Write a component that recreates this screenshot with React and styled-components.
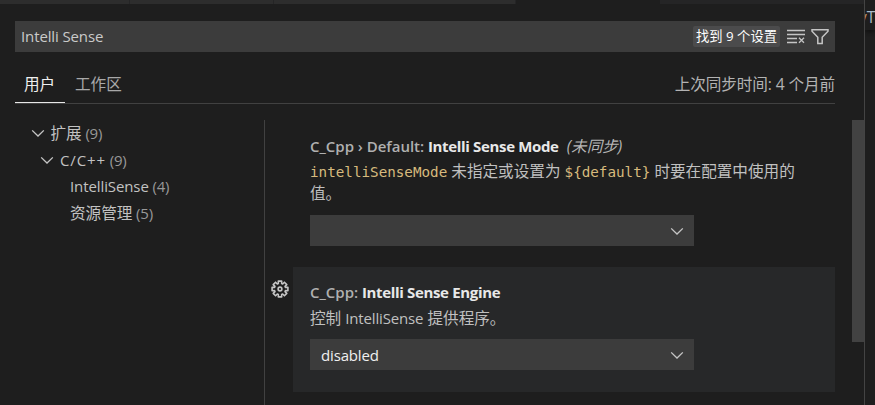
import React from "react";
import styled, { createGlobalStyle } from "styled-components";

const Global = createGlobalStyle`
  * { box-sizing: border-box; }
  body {
    margin: 0;
    background: #1e1e1e;
    overflow: hidden;
    color: #c2c2c2;
    font: 15.6px/22px "Open Sans", "Noto Sans CJK SC", sans-serif;
  }
`;

const Window = styled.div`
  display: grid;
  grid-template-columns: 864px 11px;
  width: 875px;
  height: 405px;
`;

const Editor = styled.main`
  display: flex;
  flex-direction: column;
  min-width: 0;
  height: 405px;
  overflow: hidden;
`;

const EditorTabs = styled.div`
  display: grid;
  grid-template-columns: 130px 144px 242px 144px 1fr;
  height: 4px;
  flex: none;
  background: #252526;
`;

const EditorTab = styled.div`
  background: ${(p) => (p.$active ? "#1e1e1e" : "#2d2d2d")};
  border-right: ${(p) => (p.$active ? "0" : "1px solid #252526")};
`;

const SearchBar = styled.div`
  display: flex;
  align-items: center;
  width: 820px;
  height: 31px;
  margin: 17px 0 0 15px;
  padding: 0 6px;
  flex: none;
  background: #3c3c3c;
  color: #cacaca;
`;

const Query = styled.span`
  flex: 1;
  padding-bottom: 2px;
`;

const ResultCount = styled.span`
  width: 87px;
  height: 21px;
  border-radius: 2px;
  background: #4b4b4c;
  color: #fff;
  font-size: 13.3px;
  line-height: 21px;
  text-align: center;
  white-space: nowrap;
`;

const SearchActions = styled.div`
  display: flex;
  gap: 6px;
  margin-left: 7px;
`;

const Icon = styled.svg`
  display: block;
  flex: none;
  fill: none;
  stroke: #c5c5c5;
  stroke-width: ${(p) => p.$weight || 1.3};
`;

const ScopeBar = styled.div`
  display: flex;
  width: 820px;
  height: 52px;
  margin-left: 15px;
  flex: none;
  border-bottom: 1px solid #414141;
`;

const ScopeTab = styled.div`
  width: ${(p) => p.$width}px;
  height: 51px;
  padding: 21px 0 0 ${(p) => p.$inset}px;
  border-bottom: 1px solid ${(p) => (p.$active ? "#e7e7e7" : "transparent")};
  color: ${(p) => (p.$active ? "#f0f0f0" : "#a8a8a8")};
`;

const SyncTime = styled.div`
  margin-left: auto;
  padding-top: 21px;
  color: #b3b3b3;
  letter-spacing: -0.1px;
  white-space: nowrap;
`;

const Body = styled.div`
  display: grid;
  grid-template-columns: 264px 588px 12px;
  height: 285px;
  margin-top: 16px;
`;

const Tree = styled.nav`
  display: flex;
  flex-direction: column;
`;

const TreeRow = styled.div`
  display: flex;
  align-items: center;
  height: 26.5px;
  padding-left: ${(p) => p.$indent}px;
  white-space: pre;
`;

const Twistie = styled.span`
  width: 20px;
  flex: none;
`;

const Latin = styled.span`
  font-size: 15px;
  letter-spacing: ${(p) => p.$tracking || 0}px;
`;

const Count = styled.span`
  color: #989898;
  font-size: 15px;
  letter-spacing: -0.2px;
`;

const Settings = styled.section`
  border-left: 1px solid #414141;
`;

const Setting = styled.article`
  display: grid;
  grid-template-columns: 28px 542px;
  height: ${(p) => p.$height}px;
`;

const Gutter = styled.div`
  padding: 13px 0 0 6px;
`;

const SettingContent = styled.div`
  padding: ${(p) => (p.$focused ? 14 : 15)}px 17px 0;
  background: ${(p) => (p.$focused ? "#272829" : "transparent")};
`;

const Title = styled.h3`
  margin: 0;
  height: ${(p) => p.$height}px;
  font-size: 15px;
  font-weight: 600;
  letter-spacing: -0.02px;
  line-height: 22px;
  white-space: pre;
  color: #b0b0b0;
`;

const Name = styled.span`
  color: #e8e8e8;
  font-weight: 700;
  letter-spacing: -0.34px;
`;

const SyncNote = styled.em`
  margin-left: 8px;
  font-size: 15.6px;
  font-weight: 400;
  color: #b6b6b6;
`;

const Description = styled.p`
  margin: 0;
  height: ${(p) => p.$height}px;
  color: #c0c0c0;
  white-space: pre;
`;

const Code = styled.code`
  font: 14.25px/20px "DejaVu Sans Mono", monospace;
  color: #d7ba7d;
`;

const Select = styled.div`
  display: flex;
  align-items: center;
  justify-content: space-between;
  width: 384px;
  height: 31px;
  padding: 0 10px 0 11px;
  background: #3c3c3c;
  color: #f0f0f0;
`;

const ScrollThumb = styled.div`
  width: 12px;
  height: 222px;
  background: #424242;
`;

const SidePane = styled.aside`
  border-left: 1px solid #444;
  overflow: hidden;
`;

const SideTab = styled.div`
  display: flex;
  height: 30px;
  padding-top: 6px;
  box-shadow: 0 2px 4px #111;
  color: #a8b9c9;
`;

const Clipped = styled.span`
  margin-left: -6px;
  color: #bf8b64;
`;

const Chevron = () => (
  <Icon width="14" height="14" viewBox="0 0 14 14">
    <path d="M1.2 4.4 7 10l5.8-5.6" />
  </Icon>
);

const ClearIcon = () => (
  <Icon width="18" height="16" viewBox="0 0 18 16">
    <path d="M0 1.5h18M0 5.5h18M0 9.5h10M0 13.5h10M12 8.8l5 5M17 8.8l-5 5" />
  </Icon>
);

const FilterIcon = () => (
  <Icon width="18" height="16" viewBox="0 0 18 16" $weight={1.5}>
    <path d="M1 .8h16v1.4l-5.8 6v6.4H6.8V8.2L1 2.2z" />
  </Icon>
);

const gearOutline = Array.from({ length: 8 }, (_, tooth) =>
  [[-17, 5.7], [-12, 8.1], [12, 8.1], [17, 5.7]]
    .map(([offset, radius]) => {
      const angle = ((tooth * 45 + offset) * Math.PI) / 180;
      return `${(9 + radius * Math.sin(angle)).toFixed(2)},${(9 - radius * Math.cos(angle)).toFixed(2)}`;
    })
    .join(" ")
).join(" ");

const GearIcon = () => (
  <Icon width="18" height="18" viewBox="0 0 18 18" $weight={1.6}>
    <polygon points={gearOutline} strokeLinejoin="round" />
    <circle cx="9" cy="9" r="1.9" />
  </Icon>
);

export default function App() {
  return (
    <>
      <Global />
      <Window>
        <Editor>
          <EditorTabs>
            <EditorTab />
            <EditorTab />
            <EditorTab />
            <EditorTab $active />
          </EditorTabs>
          <SearchBar>
            <Query><Latin $tracking={-0.12}>Intelli Sense</Latin></Query>
            <ResultCount>找到 9 个设置</ResultCount>
            <SearchActions>
              <ClearIcon />
              <FilterIcon />
            </SearchActions>
          </SearchBar>
          <ScopeBar>
            <ScopeTab $active $width={50} $inset={9}>用户</ScopeTab>
            <ScopeTab $width={70} $inset={10}>工作区</ScopeTab>
            <SyncTime>上次同步时间: 4 个月前</SyncTime>
          </ScopeBar>
          <Body>
            <Tree>
              <TreeRow $indent={30.5}><Twistie><Chevron /></Twistie>扩展<Count> (9)</Count></TreeRow>
              <TreeRow $indent={40}><Twistie><Chevron /></Twistie><Latin $tracking={0.9}>C/C++</Latin><Count> (9)</Count></TreeRow>
              <TreeRow $indent={70}><Latin $tracking={-0.1}>IntelliSense</Latin><Count> (4)</Count></TreeRow>
              <TreeRow $indent={70}>资源管理<Count> (5)</Count></TreeRow>
            </Tree>
            <Settings>
              <Setting $height={147}>
                <Gutter />
                <SettingContent>
                  <Title $height={25}>C_Cpp › Default: <Name>Intelli Sense Mode</Name><SyncNote>(未同步)</SyncNote></Title>
                  <Description $height={55}>
                    <Code>intelliSenseMode</Code> 未指定或设置为 <Code>{"${default}"}</Code> 时要在配置中使用的{"\n"}值。
                  </Description>
                  <Select><span /><Chevron /></Select>
                </SettingContent>
              </Setting>
              <Setting $height={125}>
                <Gutter><GearIcon /></Gutter>
                <SettingContent $focused>
                  <Title $height={26}>C_Cpp: <Name>Intelli Sense Engine</Name></Title>
                  <Description $height={32}>控制 <Latin $tracking={-0.15}>IntelliSense</Latin> 提供程序。</Description>
                  <Select><Latin $tracking={-0.15}>disabled</Latin><Chevron /></Select>
                </SettingContent>
              </Setting>
            </Settings>
            <ScrollThumb />
          </Body>
        </Editor>
        <SidePane>
          <SideTab><Clipped>y</Clipped>T</SideTab>
        </SidePane>
      </Window>
    </>
  );
}
